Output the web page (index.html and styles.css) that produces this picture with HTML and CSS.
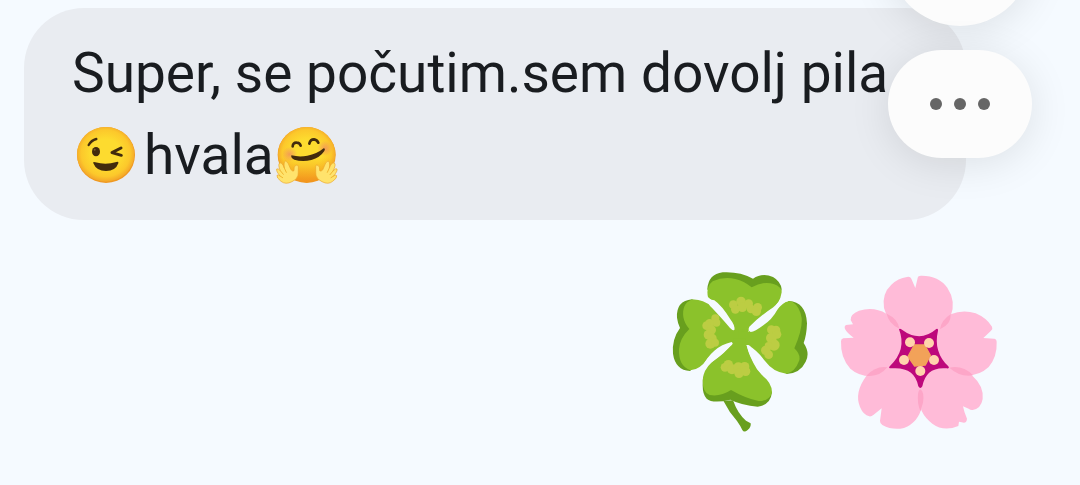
FILE: index.html
```html
<!DOCTYPE html>
<html lang="sl">
<head>
  <meta charset="UTF-8" />
  <meta name="viewport" content="width=device-width, initial-scale=1" />
  <title>Messages</title>
  <link rel="stylesheet" href="styles.css">
</head>
<body>
  <main class="chat">
    <p class="bubble">Super, se počutim.sem dovolj pila
      <svg class="emoji wink" viewBox="0 0 180 180" role="img" aria-label="winking face">
        <defs>
          <radialGradient id="face" cx="50%" cy="48%" r="52%">
            <stop offset="0.5" stop-color="#fddb2f" />
            <stop offset="0.82" stop-color="#fcc82b" />
            <stop offset="1" stop-color="#f3a529" />
          </radialGradient>
        </defs>
        <ellipse cx="90" cy="90" rx="87" ry="84" fill="#ef9820" />
        <ellipse cx="89" cy="88" rx="86" ry="82" fill="url(#face)" />
        <g fill="none" stroke="#422b0d" stroke-linecap="round" stroke-linejoin="round">
          <path d="M38 60Q46 46 61 42" stroke-width="7" />
          <path d="M135 69L108 83L136 91" stroke-width="9" />
        </g>
        <ellipse cx="60" cy="80" rx="12" ry="14" fill="#422b0d" />
        <circle cx="56" cy="74" r="3" fill="#7a5a2e" />
        <path d="M52 115Q50 109 58 112Q90 121 121 111Q129 108 127 115Q119 138 90 138Q61 138 52 115Z" fill="#422b0d" />
      </svg>hvala<svg class="emoji hug" viewBox="0 0 186 180" role="img" aria-label="hugging face">
        <defs>
          <radialGradient id="blush">
            <stop offset="0" stop-color="#ed7770" stop-opacity="0.6" />
            <stop offset="1" stop-color="#ed7770" stop-opacity="0" />
          </radialGradient>
          <linearGradient id="chin" x1="0" y1="0" x2="0" y2="1">
            <stop offset="0.55" stop-color="#f3a01d" stop-opacity="0" />
            <stop offset="1" stop-color="#f3951d" />
          </linearGradient>
        </defs>
        <ellipse cx="92" cy="90" rx="87" ry="84" fill="#ef9820" />
        <ellipse cx="92" cy="88" rx="86" ry="82" fill="url(#face)" />
        <ellipse cx="92" cy="89" rx="84" ry="83" fill="url(#chin)" />
        <circle cx="41" cy="88" r="23" fill="url(#blush)" />
        <circle cx="147" cy="70" r="23" fill="url(#blush)" />
        <g fill="none" stroke="#422b0d" stroke-width="8" stroke-linecap="round">
          <path d="M50 64Q51 52 62 53Q71 53 74 62" />
          <path d="M100 56Q103 43 114 43Q123 44 127 53" />
        </g>
        <path d="M46 91Q44 100 55 104Q79 112 106 105Q132 98 145 78Q149 70 143 70Q123 87 94 92Q71 97 46 91Z" fill="#422b0d" />
        <g fill="#ffe36c" stroke="#eba52a" stroke-width="2" stroke-linejoin="round">
          <path d="M48 170Q29 180 15 169Q1 158 3 151Q6 148 12 153Q0 138 2 132Q6 129 13 137Q5 119 11 114Q18 111 25 129Q22 109 29 108Q36 109 42 128Q48 142 54 137Q53 124 59 121Q69 117 67 132Q67 145 66 151Q63 164 48 170Z" />
          <path d="M138 170Q157 180 170 169Q184 159 182 152Q179 148 173 153Q185 138 183 132Q180 128 171 138Q181 119 175 114Q167 111 160 129Q163 109 156 108Q149 109 143 128Q138 142 131 137Q132 124 126 121Q117 117 119 132Q119 145 120 151Q123 164 138 170Z" />
        </g>
        <g fill="none" stroke="#f0b52e" stroke-width="3" stroke-linecap="round">
          <path d="M13 137L22 148M25 129L31 142M12 153L20 158" />
          <path d="M171 138L162 149M160 129L154 142M173 153L165 158" />
        </g>
      </svg>
    </p>

    <div class="stickers">
      <svg class="clover" viewBox="0 0 480 540" role="img" aria-label="four leaf clover">
        <!-- stem -->
        <path d="M190 422L219 421Q234 463 258 482L272 490Q274 501 263 510Q252 519 247 510Q241 497 231 483Q207 456 190 422Z" fill="#689f1e" />
        <!-- dark rims -->
        <g fill="#689f1e">
          <path d="M142 88Q145 42 188 37Q239 34 279 56Q307 37 339 51Q362 64 365 88L343 145L190 150Z" />
          <path d="M96 118Q48 123 51 173Q53 189 60 204Q35 238 39 281Q46 330 90 333L175 260L180 150Z" />
          <path d="M386 123Q438 126 441 190Q440 225 431 249Q451 279 437 305Q421 339 380 342L300 270L340 180Z" />
          <path d="M130 350Q123 399 140 416Q158 432 211 419Q246 436 293 440Q332 435 336 397L270 330L180 325Z" />
        </g>
        <!-- leaves -->
        <g fill="#8bc22b">
          <path d="M223 210Q205 169 144 111Q137 81 158 64Q190 49 226 57Q252 63 275 82Q311 62 341 72Q366 81 365 97Q360 132 334 148Q287 180 265 213L264 255L222 255Z" />
          <path d="M223 210Q194 170 157 140Q123 115 94 119Q65 131 70 171Q73 190 88 207Q60 234 57 267Q55 318 91 331Q120 329 142 296Q172 265 218 249L270 242L260 207Z" />
          <path d="M265 215Q284 203 317 181Q346 158 361 135Q377 120 397 125Q420 140 425 174Q428 207 403 265Q422 283 418 301Q405 337 379 341Q340 337 315 303Q291 270 263 255L235 245L235 212Z" />
          <path d="M218 249Q196 279 156 306Q130 330 128 360Q128 399 149 405Q181 411 213 390Q258 416 296 423Q329 424 336 397Q336 369 306 345Q276 307 260 257L255 235L220 235Z" />
        </g>
        <!-- pale marks -->
        <g fill="#bccd43">
          <circle cx="220" cy="134" r="13" />
          <circle cx="226" cy="148" r="13" />
          <circle cx="243" cy="124" r="14" />
          <circle cx="247" cy="142" r="14" />
          <circle cx="266" cy="131" r="13" />
          <circle cx="273" cy="147" r="13" />
          <circle cx="293" cy="142" r="13" />
          <circle cx="289" cy="154" r="14" />
          <circle cx="166" cy="175" r="12" />
          <circle cx="169" cy="188" r="12" />
          <circle cx="149" cy="190" r="13" />
          <circle cx="140" cy="197" r="13" />
          <circle cx="154" cy="210" r="14" />
          <circle cx="146" cy="224" r="15" />
          <circle cx="156" cy="235" r="14" />
          <circle cx="151" cy="251" r="15" />
          <circle cx="165" cy="248" r="12" />
          <circle cx="334" cy="209" r="13" />
          <circle cx="348" cy="210" r="13" />
          <circle cx="351" cy="223" r="13" />
          <circle cx="334" cy="234" r="16" />
          <circle cx="342" cy="255" r="17" />
          <circle cx="326" cy="258" r="12" />
          <circle cx="317" cy="271" r="14" />
          <circle cx="326" cy="284" r="13" />
          <circle cx="195" cy="322" r="13" />
          <circle cx="205" cy="314" r="14" />
          <circle cx="216" cy="328" r="15" />
          <circle cx="235" cy="322" r="15" />
          <circle cx="237" cy="340" r="14" />
          <circle cx="254" cy="320" r="14" />
          <circle cx="257" cy="334" r="14" />
        </g>
        <!-- gaps between the leaves -->
        <g fill="#f5faff">
          <path d="M141 110Q145 117 163 121Q186 137 211 178Q226 197 223 210Q216 213 205 198Q185 175 157 145Q139 128 141 110Z" />
          <path d="M366 108Q358 128 338 143Q300 168 268 200Q262 212 272 216Q285 214 308 197Q337 178 352 149Q365 130 386 122Z" />
          <path d="M130 317Q140 292 163 272Q185 253 215 246Q222 251 211 259Q187 283 156 306Q137 318 130 317Z" />
          <path d="M260 256Q269 252 279 271Q296 296 323 320Q337 337 333 365Q313 355 291 328Q266 287 260 256Z" />
        </g>
      </svg>
      <svg class="blossom" viewBox="0 0 540 540" role="img" aria-label="cherry blossom">
        <!-- petals -->
        <g fill="#ffbbd8">
          <path d="M231 51Q240 48 244 56L256 84L263 54Q264 47 273 47Q325 46 352 83Q379 124 362 169Q346 205 322 218L270 252L209 207Q173 187 162 144Q155 101 184 74Q204 55 231 51Z" />
          <path d="M362 163Q399 147 437 160Q470 174 486 200Q489 206 483 212L460 234L492 236Q500 237 500 246Q502 290 476 321Q441 354 387 345Q356 338 335 315L270 285L320 212Q333 177 362 163Z" />
          <path d="M427 347Q462 378 458 417Q453 446 428 450Q422 451 416 446L399 439Q402 456 411 476Q410 492 395 487L387 485L385 498Q341 516 307 491Q265 460 264 403L270 300L357 323Q400 321 427 347Z" />
          <path d="M109 348Q72 398 90 441Q100 465 118 469Q124 470 130 465L155 445L150 483Q150 491 157 495Q188 512 222 504Q265 488 276 439Q287 397 270 383L260 300L173 322Q132 322 109 348Z" />
          <path d="M169 161Q132 139 87 152Q60 163 62 180L69 193L48 195Q42 198 45 207Q51 219 71 233L40 235Q33 236 33 244Q31 294 61 326Q88 350 128 348Q161 342 179 321L265 285L209 207Q197 178 169 161Z" />
        </g>
        <!-- overlaps -->
        <g fill="#fda6c8">
          <path d="M170 161Q205 177 208 206Q175 190 170 161Z" />
          <path d="M362 163Q364 193 330 208Q334 180 362 163Z" />
          <path d="M358 323Q399 315 429 346Q390 352 358 323Z" />
          <path d="M172 322Q139 316 109 347Q148 352 172 322Z" />
          <path d="M271 388Q284 396 279 428L271 454Q261 428 264 403Q265 391 271 388Z" />
        </g>
        <!-- centre -->
        <path d="M207 208Q209 204 216 209Q270 249 319 207Q325 205 324 212Q309 275 355 319Q360 326 350 325Q288 319 277 379Q271 389 265 379Q254 319 184 325Q173 325 180 318Q231 269 207 208Z" fill="#bd087b" />
        <path d="M253 255L284 255L301 286L286 315L254 318L234 290Z" fill="#f2a259" stroke="#f2a259" stroke-width="4" stroke-linejoin="round" />
        <g fill="#ffd3ad">
          <circle cx="240" cy="247" r="15" />
          <circle cx="297" cy="249" r="15" />
          <circle cx="312" cy="300" r="15" />
          <circle cx="271" cy="333" r="15" />
          <circle cx="222" cy="300" r="15" />
        </g>
      </svg>
    </div>
  </main>

  <div class="floating">
    <button class="float-btn round" type="button" aria-label="Close"></button>
    <button class="float-btn" type="button" aria-label="More options">
      <span class="dot"></span>
      <span class="dot"></span>
      <span class="dot"></span>
    </button>
  </div>
</body>
</html>
```
FILE: styles.css
```css
body {
  margin: 0;
  min-height: 100vh;
  position: relative;
  overflow: hidden;
  font-family: Roboto, 'Liberation Sans', sans-serif;
  background: #f5faff;
  color: #191c20;
}
.chat {
  padding: 8px 24px;
}
.bubble {
  margin: 0 90px 0 0;
  padding: 24px 48px;
  border-radius: 60px;
  background: #e9ecf1;
  font-size: 55px;
  line-height: 82px;
}
.emoji {
  height: 60px;
  vertical-align: -11px;
}
.wink {
  width: 60px;
  margin: 0 8px 0 4px;
}
.hug {
  width: 62px;
  margin-left: 2px;
}
.stickers {
  display: flex;
  justify-content: flex-end;
  gap: 10px;
  margin-top: 40px;
  padding-right: 46px;
}
.clover {
  width: 160px;
  height: 180px;
}
.blossom {
  width: 180px;
  height: 180px;
}
/* floats over the conversation, first button is partly scrolled off */
.floating {
  position: absolute;
  top: -118px;
  right: 48px;
  display: flex;
  flex-direction: column;
  gap: 24px;
}
.float-btn {
  display: flex;
  align-items: center;
  justify-content: center;
  gap: 12px;
  width: 144px;
  height: 108px;
  padding: 0;
  border: none;
  border-radius: 54px;
  background: #fcfcfc;
  box-shadow: 0 6px 42px rgba(0, 0, 0, 0.1);
  cursor: pointer;
}
.round {
  height: 144px;
  border-radius: 50%;
}
.dot {
  width: 12px;
  height: 12px;
  border-radius: 50%;
  background: #666;
}
```
